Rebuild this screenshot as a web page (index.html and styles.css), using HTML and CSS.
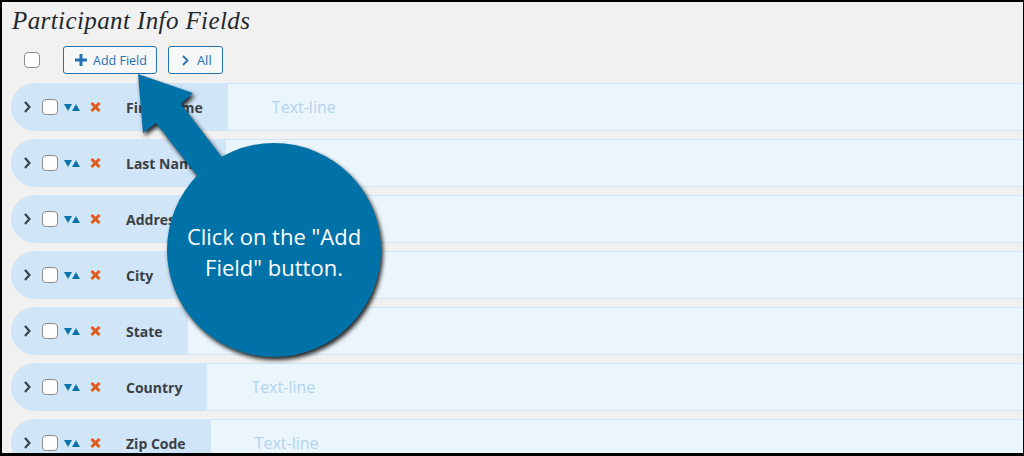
FILE: index.html
```html
<!DOCTYPE html>
<html lang="en">
<head>
  <meta charset="UTF-8" />
  <title>Participant Info Fields</title>
  <link rel="stylesheet" href="styles.css">
</head>
<body>
  <div class="frame">
    <h2 class="title">Participant Info Fields</h2>

    <div class="toolbar">
      <span class="check"></span>
      <button class="btn btn-add">
        <svg width="12" height="12" viewBox="0 0 12 12"><path d="M6 0v12M0 6h12" stroke="#2271b1" stroke-width="3"/></svg>
        Add Field
      </button>
      <button class="btn btn-all">
        <svg width="7" height="11" viewBox="0 0 7 11"><path d="M1 1l4.5 4.5L1 10" fill="none" stroke="#2271b1" stroke-width="1.8"/></svg>
        All
      </button>
    </div>

    <div class="fields">
      <div class="field">
        <div class="field-head">
          <svg class="ico-open" width="7" height="12" viewBox="0 0 7 12"><path d="M1 1l4.5 5L1 11" fill="none" stroke="#3c434a" stroke-width="2.2"/></svg>
          <span class="check"></span>
          <svg class="ico-sort" width="16" height="7" viewBox="0 0 16 7"><path d="M0 0h8L4 7zM8 7h8L12 0z" fill="#0a72a8"/></svg>
          <svg class="ico-del" width="11" height="10" viewBox="0 0 11 10"><path d="M1.5 1l8 8M9.5 1l-8 8" stroke="#de5a20" stroke-width="3"/></svg>
          <span class="field-name">First Name</span>
        </div>
        <div class="field-type">Text-line</div>
      </div>
      <div class="field">
        <div class="field-head">
          <svg class="ico-open" width="7" height="12" viewBox="0 0 7 12"><path d="M1 1l4.5 5L1 11" fill="none" stroke="#3c434a" stroke-width="2.2"/></svg>
          <span class="check"></span>
          <svg class="ico-sort" width="16" height="7" viewBox="0 0 16 7"><path d="M0 0h8L4 7zM8 7h8L12 0z" fill="#0a72a8"/></svg>
          <svg class="ico-del" width="11" height="10" viewBox="0 0 11 10"><path d="M1.5 1l8 8M9.5 1l-8 8" stroke="#de5a20" stroke-width="3"/></svg>
          <span class="field-name">Last Name</span>
        </div>
        <div class="field-type">Text-line</div>
      </div>
      <div class="field">
        <div class="field-head">
          <svg class="ico-open" width="7" height="12" viewBox="0 0 7 12"><path d="M1 1l4.5 5L1 11" fill="none" stroke="#3c434a" stroke-width="2.2"/></svg>
          <span class="check"></span>
          <svg class="ico-sort" width="16" height="7" viewBox="0 0 16 7"><path d="M0 0h8L4 7zM8 7h8L12 0z" fill="#0a72a8"/></svg>
          <svg class="ico-del" width="11" height="10" viewBox="0 0 11 10"><path d="M1.5 1l8 8M9.5 1l-8 8" stroke="#de5a20" stroke-width="3"/></svg>
          <span class="field-name">Address</span>
        </div>
        <div class="field-type"></div>
      </div>
      <div class="field">
        <div class="field-head">
          <svg class="ico-open" width="7" height="12" viewBox="0 0 7 12"><path d="M1 1l4.5 5L1 11" fill="none" stroke="#3c434a" stroke-width="2.2"/></svg>
          <span class="check"></span>
          <svg class="ico-sort" width="16" height="7" viewBox="0 0 16 7"><path d="M0 0h8L4 7zM8 7h8L12 0z" fill="#0a72a8"/></svg>
          <svg class="ico-del" width="11" height="10" viewBox="0 0 11 10"><path d="M1.5 1l8 8M9.5 1l-8 8" stroke="#de5a20" stroke-width="3"/></svg>
          <span class="field-name">City</span>
        </div>
        <div class="field-type"></div>
      </div>
      <div class="field">
        <div class="field-head">
          <svg class="ico-open" width="7" height="12" viewBox="0 0 7 12"><path d="M1 1l4.5 5L1 11" fill="none" stroke="#3c434a" stroke-width="2.2"/></svg>
          <span class="check"></span>
          <svg class="ico-sort" width="16" height="7" viewBox="0 0 16 7"><path d="M0 0h8L4 7zM8 7h8L12 0z" fill="#0a72a8"/></svg>
          <svg class="ico-del" width="11" height="10" viewBox="0 0 11 10"><path d="M1.5 1l8 8M9.5 1l-8 8" stroke="#de5a20" stroke-width="3"/></svg>
          <span class="field-name">State</span>
        </div>
        <div class="field-type">Text-line</div>
      </div>
      <div class="field">
        <div class="field-head">
          <svg class="ico-open" width="7" height="12" viewBox="0 0 7 12"><path d="M1 1l4.5 5L1 11" fill="none" stroke="#3c434a" stroke-width="2.2"/></svg>
          <span class="check"></span>
          <svg class="ico-sort" width="16" height="7" viewBox="0 0 16 7"><path d="M0 0h8L4 7zM8 7h8L12 0z" fill="#0a72a8"/></svg>
          <svg class="ico-del" width="11" height="10" viewBox="0 0 11 10"><path d="M1.5 1l8 8M9.5 1l-8 8" stroke="#de5a20" stroke-width="3"/></svg>
          <span class="field-name">Country</span>
        </div>
        <div class="field-type">Text-line</div>
      </div>
      <div class="field">
        <div class="field-head">
          <svg class="ico-open" width="7" height="12" viewBox="0 0 7 12"><path d="M1 1l4.5 5L1 11" fill="none" stroke="#3c434a" stroke-width="2.2"/></svg>
          <span class="check"></span>
          <svg class="ico-sort" width="16" height="7" viewBox="0 0 16 7"><path d="M0 0h8L4 7zM8 7h8L12 0z" fill="#0a72a8"/></svg>
          <svg class="ico-del" width="11" height="10" viewBox="0 0 11 10"><path d="M1.5 1l8 8M9.5 1l-8 8" stroke="#de5a20" stroke-width="3"/></svg>
          <span class="field-name">Zip Code</span>
        </div>
        <div class="field-type">Text-line</div>
      </div>
    </div>
  </div>

  <!-- tutorial callout over the page -->
  <div class="callout">
    <svg class="callout-shape" width="1024" height="456" viewBox="0 0 1024 456">
      <polygon points="138,74 193,93 181,104 285.9,240.8 262.1,259.2 156,123 143,133" fill="#0072a8"/>
      <circle cx="274" cy="250" r="107" fill="#0072a8"/>
    </svg>
    <p class="callout-text">Click on the "Add<br>Field" button.</p>
  </div>
</body>
</html>
```

FILE: styles.css
```css
body { margin: 0; font-family: "Open Sans", sans-serif; position: relative; width: 1024px; height: 456px; overflow: hidden; }
.frame { box-sizing: border-box; height: 456px; border: 2px solid #000; border-right-width: 1px; border-bottom-width: 3px; background: #f1f1f1; overflow: hidden; }

.title { margin: 0; padding: 5px 0 0 10px; font: italic 400 25px/28px "Liberation Serif", serif; letter-spacing: 0.4px; color: #23282d; }

.toolbar { display: flex; align-items: center; height: 28px; margin-top: 11px; }
.toolbar .check { margin: 0 23px 0 22px; }
.check { display: inline-block; box-sizing: border-box; width: 16px; height: 16px; border: 1px solid #8c8f94; border-radius: 4px; background: #fff; flex: none; }
.btn { display: flex; align-items: center; box-sizing: border-box; height: 28px; border: 1px solid #2271b1; border-radius: 3px; background: #f6f7f7; color: #2271b1; font: 400 12.5px "Open Sans", sans-serif; }
.btn-add { padding: 0 9px 0 11px; gap: 6px; margin-right: 11px; }
.btn-all { padding: 0 10px 0 13px; gap: 8px; font-size: 13px; }

.fields { margin-top: 9px; }
.field { display: flex; box-sizing: border-box; height: 48px; margin: 0 0 8px 9px; padding: 1px 0; background: #d0e5f7; border-radius: 24px 0 0 24px; }
.field-head { display: flex; align-items: center; padding: 0 25px 0 13px; }
.field-head .check { margin-left: 11px; }
.ico-sort { margin-left: 6px; }
.ico-del { margin-left: 10px; }
.field-name { margin-left: 25px; font-weight: 700; font-size: 14px; color: #3a3f44; }
.field-type { flex: 1; display: flex; align-items: center; padding-left: 44px; background: #ebf6fc; color: #b4d3ee; font-size: 16px; }

.callout { position: absolute; left: 0; top: 0; width: 1024px; height: 456px; pointer-events: none; }
.callout-shape { display: block; filter: drop-shadow(2px 3px 2px rgba(0,0,0,0.85)); }
.callout-text { position: absolute; left: 164px; top: 221px; width: 220px; margin: 0; text-align: center; color: #fff; font-size: 22px; line-height: 31px; }
```
